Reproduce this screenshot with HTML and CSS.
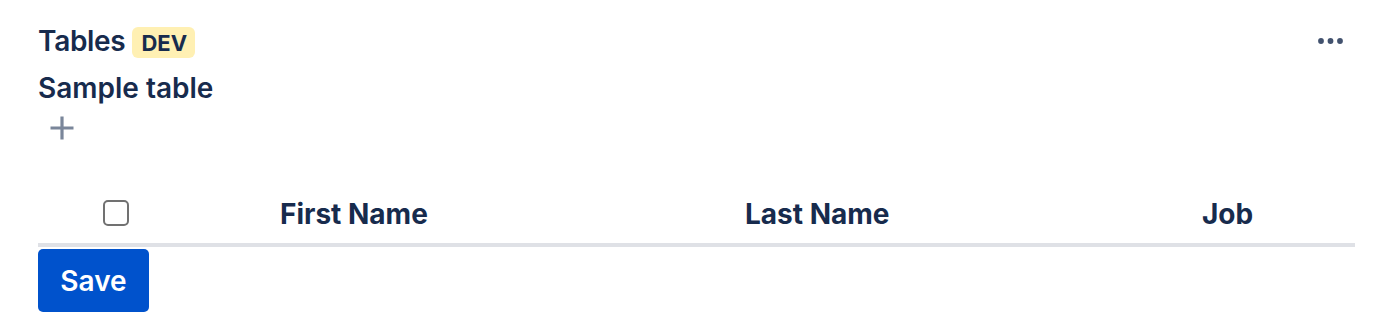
FILE: index.html
```html
<!DOCTYPE html>
<html>
<head>
<meta charset="utf-8">
<link rel="stylesheet" href="styles.css">
</head>
<body>
<div class="page">
  <div class="title-row">
    <div class="title-left">
      <h1 class="app-title">Tables</h1>
      <span class="lozenge">DEV</span>
    </div>
    <button class="more-btn" aria-label="More">
      <svg width="32" height="32" viewBox="0 0 32 32"><circle cx="7" cy="16" r="2.9" fill="#42526E"/><circle cx="16.5" cy="16" r="2.9" fill="#42526E"/><circle cx="26" cy="16" r="2.9" fill="#42526E"/></svg>
    </button>
  </div>
  <h2 class="table-title">Sample table</h2>
  <button class="add-btn" aria-label="Add">
    <svg width="48" height="48" viewBox="0 0 48 48"><path d="M24 12.5v23M12.5 24h23" stroke="#7A869A" stroke-width="3.2" fill="none"/></svg>
  </button>
  <div class="table">
    <div class="thead">
      <div class="th th-check"><input type="checkbox" class="check"></div>
      <div class="th">First Name</div>
      <div class="th">Last Name</div>
      <div class="th">Job</div>
    </div>
  </div>
  <button class="save-btn">Save</button>
</div>
</body>
</html>
```
FILE: styles.css
```css
html, body {
  margin: 0;
  padding: 0;
  background: #ffffff;
}
body {
  font-family: Inter, "Noto Sans", "Liberation Sans", sans-serif;
  color: #172B4D;
}
.page {
  padding: 25px 23px 0 38px;
}
.title-row {
  display: flex;
  align-items: center;
  justify-content: space-between;
  height: 32px;
}
.title-left {
  display: flex;
  align-items: center;
}
.app-title {
  margin: 0;
  font-size: 28px;
  font-weight: 600;
  line-height: 32px;
  letter-spacing: -0.3px;
}
.lozenge {
  margin-left: 7px;
  margin-top: 3px;
  height: 31px;
  padding: 0 8px 0 9px;
  box-sizing: border-box;
  display: inline-flex;
  align-items: center;
  background: #FFF0B3;
  border-radius: 6px;
  font-size: 22px;
  font-weight: 700;
  text-transform: uppercase;
  line-height: 1;
  color: #172B4D;
}
.more-btn {
  border: 0;
  padding: 0;
  margin: 0 9px 0 0;
  background: transparent;
  width: 32px;
  height: 32px;
  display: flex;
}
.table-title {
  margin: 15px 0 0 0;
  font-size: 28px;
  font-weight: 600;
  line-height: 32px;
  letter-spacing: 0;
}
.add-btn {
  display: flex;
  border: 0;
  padding: 0;
  margin: 0;
  width: 48px;
  height: 48px;
  background: transparent;
}
.table {
  margin-top: 31px;
}
.thead {
  display: grid;
  grid-template-columns: 242px 465px 457px 1fr;
  height: 60px;
  align-items: center;
  border-bottom: 4px solid #DFE1E6;
}
.th {
  font-size: 28px;
  font-weight: 700;
  line-height: 32px;
  letter-spacing: 0;
  padding-top: 2px;
}
.th-check {
  display: flex;
  align-items: center;
  padding: 0 0 0 65px;
}
.check {
  -webkit-appearance: none;
  appearance: none;
  margin: 0;
  width: 26px;
  height: 26px;
  border: 2.5px solid #717171;
  border-radius: 5px;
  box-sizing: border-box;
  background: #fff;
}
.save-btn {
  margin-top: 2px;
  display: block;
  width: 111px;
  height: 63px;
  border: 0;
  border-radius: 5px;
  background: #0052CC;
  color: #ffffff;
  font-family: Inter, "Noto Sans", "Liberation Sans", sans-serif;
  font-size: 28px;
  font-weight: 600;
  padding: 0;
}
```
